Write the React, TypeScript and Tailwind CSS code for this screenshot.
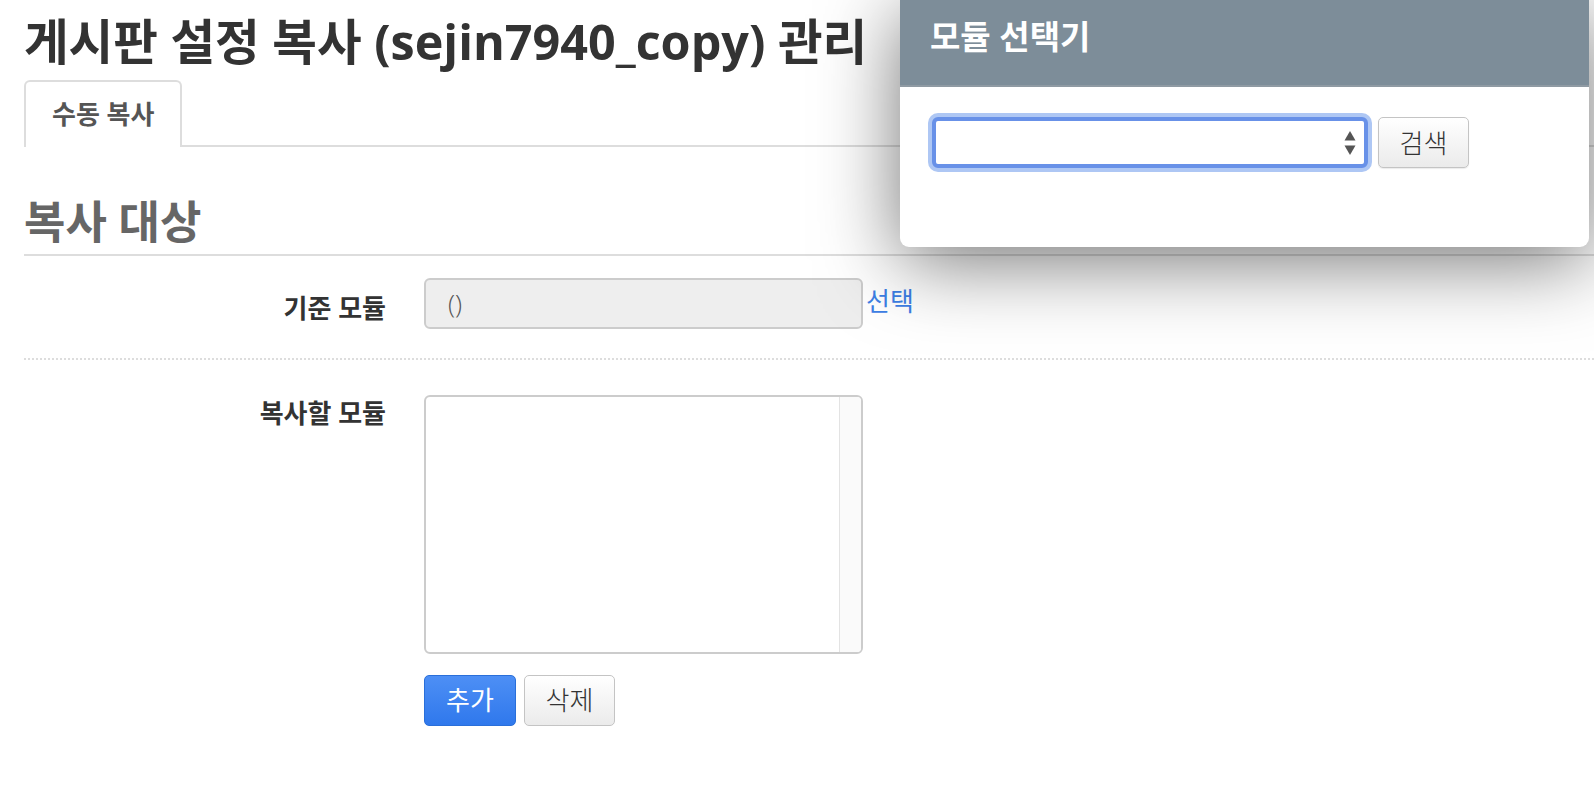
const FONT = "font-['Open_Sans','Noto_Sans_CJK_KR',sans-serif]";

function FieldRow({
  label,
  children,
  className = "",
}: {
  label: string;
  children: React.ReactNode;
  className?: string;
}) {
  return (
    <div className={`flex items-start ${className}`}>
      <div className="w-[362px] shrink-0 text-right text-[26px] font-bold leading-[36px] text-[#333]">
        {label}
      </div>
      <div className="pl-[38px]">{children}</div>
    </div>
  );
}

function ModulePicker() {
  return (
    <div className="absolute left-[900px] top-0 w-[689px] overflow-hidden rounded-b-[9px] bg-white shadow-[0_14px_80px_rgba(0,0,0,0.55)]">
      <div className="flex h-[87px] items-center border-b-2 border-[#8f9aa3] bg-[#7d8d99] pl-[30px] pb-[12px]">
        <h3 className="text-[33px] font-bold leading-none text-white">모듈 선택기</h3>
      </div>
      <div className="flex items-center gap-[10px] px-[32px] pt-[30px] pb-[79px]">
        <div className="relative h-[51px] w-[436px] rounded-[6px] border-[4px] border-[#6891e8] bg-white shadow-[0_0_0_4px_#aec7f4]">
          <svg
            viewBox="0 0 12 26"
            className="absolute right-[8px] top-[9px] h-[26px] w-[12px]"
            aria-hidden="true"
          >
            <path d="M6 1 11.5 10.5H.5Z" fill="#555" />
            <path d="M6 25 11.5 15.5H.5Z" fill="#555" />
          </svg>
        </div>
        <button
          type="button"
          className="h-[51px] w-[91px] rounded-[5px] border border-[#c4c4c4] bg-gradient-to-b from-white to-[#ebebeb] text-[26px] font-light leading-none text-[#333] shadow-[0_1px_1px_rgba(0,0,0,0.08)]"
        >
          검색
        </button>
      </div>
    </div>
  );
}

export default function App() {
  return (
    <div className={`relative min-h-screen overflow-hidden bg-white ${FONT}`}>
      <div className="pl-6 pt-[12px]">
        <h1 className="text-[48.5px] font-bold leading-[58px] text-[#333]">
          게시판 설정 복사 (sejin7940_copy) 관리
        </h1>

        <div className="mt-[10px] flex border-b-2 border-[#ddd]">
          <div className="-mb-[2px] flex h-[67px] items-center rounded-t-[6px] border-2 border-b-0 border-[#ddd] bg-white px-[26px] text-[26px] font-semibold text-[#555]">
            수동 복사
          </div>
        </div>

        <h2 className="mt-[45px] border-b-2 border-[#ddd] pb-[2px] text-[45px] font-bold leading-[60px] text-[#666]">
          복사 대상
        </h2>

        <FieldRow label="기준 모듈" className="mt-[22px] pt-[12px]">
          <div className="-mt-[12px] flex items-start">
            <div className="flex h-[51px] w-[439px] items-center rounded-[6px] border-2 border-[#ccc] bg-[#eee] pl-[22px] text-[26px] font-light text-[#555]">
              ()
            </div>
            <a href="#" className="ml-[3px] mt-[5px] text-[26px] leading-[36px] text-[#3d80e6]">
              선택
            </a>
          </div>
        </FieldRow>

        <div className="mt-[29px] border-t-2 border-dotted border-[#ddd]" />

        <FieldRow label="복사할 모듈" className="mt-[35px]">
          <div className="flex h-[259px] w-[439px] overflow-hidden rounded-[6px] border-2 border-[#ccc] bg-white">
            <div className="flex-1" />
            <div className="w-[22px] border-l border-[#e3e3e3] bg-[#fafafa]" />
          </div>
          <div className="mt-[21px] flex gap-[8px]">
            <button
              type="button"
              className="h-[51px] w-[92px] rounded-[5px] border border-[#2a6fd9] bg-gradient-to-b from-[#4d8ff5] to-[#2f78ec] text-[26px] text-white"
            >
              추가
            </button>
            <button
              type="button"
              className="h-[51px] w-[91px] rounded-[5px] border border-[#c4c4c4] bg-gradient-to-b from-white to-[#ebebeb] text-[26px] font-light text-[#333]"
            >
              삭제
            </button>
          </div>
        </FieldRow>
      </div>

      <ModulePicker />
    </div>
  );
}
